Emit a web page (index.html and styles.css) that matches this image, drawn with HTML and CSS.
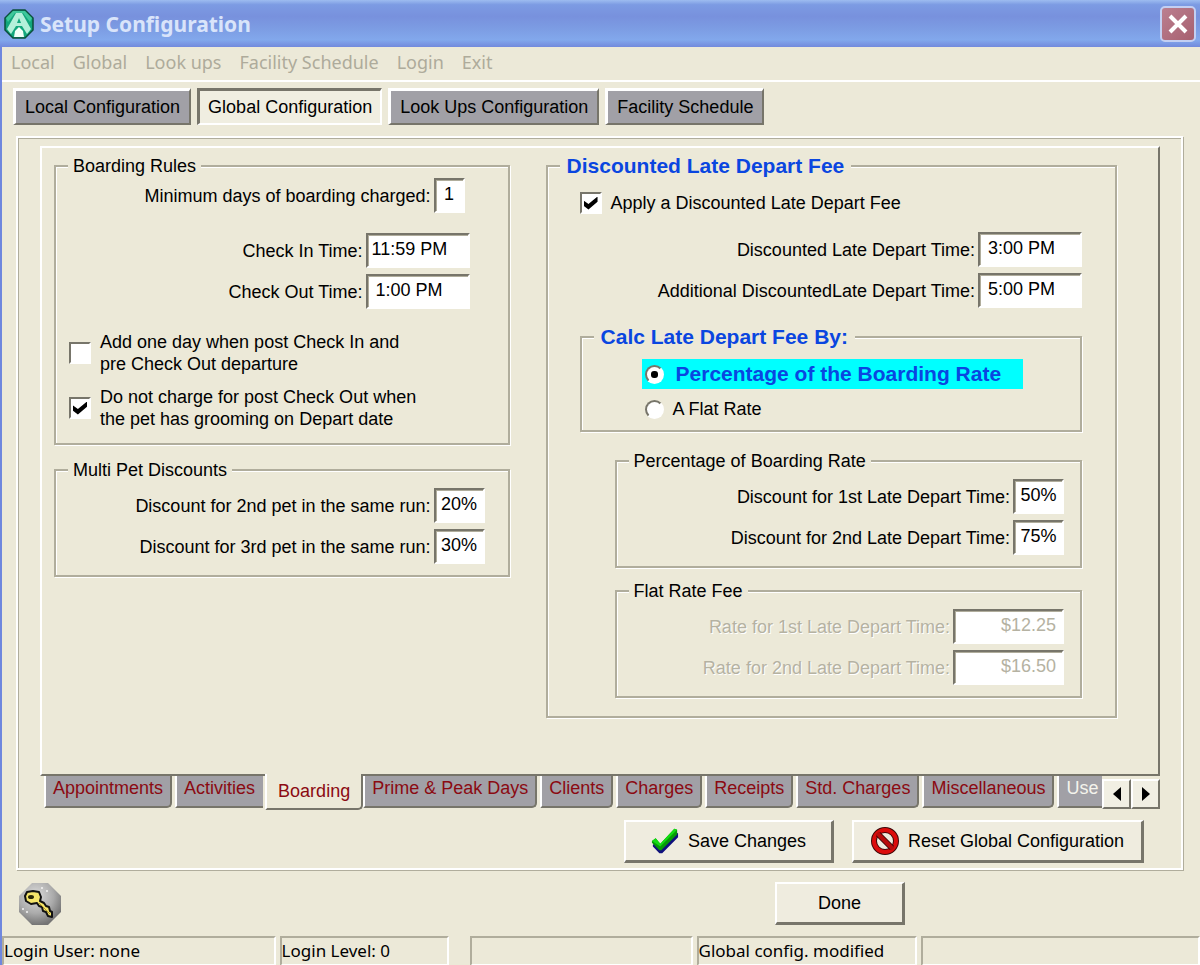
FILE: index.html
```html
<!DOCTYPE html>
<html lang="en">

<head>
	<meta charset="UTF-8">
	<meta name="viewport" content="width=device-width, initial-scale=1.0">

	<title>Setup Configuration</title>

	<link rel="stylesheet" href="styles.css">
</head>

<body>
	<div class="window">
		<header class="titlebar">
			<svg class="logo" viewBox="0 0 30 30" aria-hidden="true">
				<path d="M9 1h12l8 8v12l-8 8H9l-8-8V9z" fill="#12a67c" stroke="#0b4f3b" stroke-width="1.5" />
				<path d="M9 2h12l7 7-2 4-7-9h-8l-7 9-2-4z" fill="#3fc79b" />
				<path d="M12 4h6l9 16-4 5-5-8h-6l-5 8-4-5z" fill="#b4f0da" />
				<path d="M15 9l2 5h-4z" fill="#12a67c" />
				<path d="M10 28l1-6 4-4 4 4 1 6z" fill="#f2fff8" />
			</svg>
			<h1>Setup Configuration</h1>
			<button class="close" type="button" aria-label="Close">
				<svg viewBox="0 0 24 24" aria-hidden="true"><path d="M4 4l16 16M20 4L4 20" stroke="#fff" stroke-width="4" /></svg>
			</button>
		</header>

		<nav class="menu">
			<a href="#local">Local</a>
			<a href="#global">Global</a>
			<a href="#lookups">Look ups</a>
			<a href="#facility">Facility Schedule</a>
			<a href="#login">Login</a>
			<a href="#exit">Exit</a>
		</nav>

		<div class="sections">
			<button type="button">Local Configuration</button>
			<button type="button" class="active">Global Configuration</button>
			<button type="button">Look Ups Configuration</button>
			<button type="button">Facility Schedule</button>
		</div>

		<main class="panel">
			<div class="page">
				<div class="col">
					<fieldset class="rules">
						<legend>Boarding Rules</legend>
						<div class="field min-days">
							<label for="min-days">Minimum days of boarding charged:</label>
							<input type="text" id="min-days" class="tiny" value="1">
						</div>
						<div class="field">
							<label for="check-in">Check In Time:</label>
							<input type="text" id="check-in" class="time flush" value="11:59 PM">
						</div>
						<div class="field">
							<label for="check-out">Check Out Time:</label>
							<input type="text" id="check-out" class="time" value="1:00 PM">
						</div>
						<div class="options">
							<div class="check">
								<input type="checkbox" id="add-day">
								<label for="add-day">Add one day when post Check In and<br>pre Check Out departure</label>
							</div>
							<div class="check">
								<input type="checkbox" id="grooming" checked>
								<label for="grooming">Do not charge for post Check Out when<br>the pet has grooming on Depart date</label>
							</div>
						</div>
					</fieldset>

					<fieldset class="multi">
						<legend>Multi Pet Discounts</legend>
						<div class="field">
							<label for="second-pet">Discount for 2nd pet in the same run:</label>
							<input type="text" id="second-pet" class="percent" value="20%">
						</div>
						<div class="field">
							<label for="third-pet">Discount for 3rd pet in the same run:</label>
							<input type="text" id="third-pet" class="percent" value="30%">
						</div>
					</fieldset>
				</div>

				<fieldset class="late">
					<legend class="strong">Discounted Late Depart Fee</legend>
					<div class="check">
						<input type="checkbox" id="apply-late" checked>
						<label for="apply-late">Apply a Discounted Late Depart Fee</label>
					</div>
					<div class="field">
						<label for="late-time">Discounted Late Depart Time:</label>
						<input type="text" id="late-time" class="time" value="3:00 PM">
					</div>
					<div class="field">
						<label for="late-time-2">Additional DiscountedLate Depart Time:</label>
						<input type="text" id="late-time-2" class="time" value="5:00 PM">
					</div>

					<fieldset class="calc">
						<legend class="strong">Calc Late Depart Fee By:</legend>
						<div class="choice selected">
							<input type="radio" name="calc" id="calc-percent" checked>
							<label for="calc-percent">Percentage of the Boarding Rate</label>
						</div>
						<div class="choice">
							<input type="radio" name="calc" id="calc-flat">
							<label for="calc-flat">A Flat Rate</label>
						</div>
					</fieldset>

					<fieldset class="rate">
						<legend>Percentage of Boarding Rate</legend>
						<div class="field">
							<label for="percent-1">Discount for 1st Late Depart Time:</label>
							<input type="text" id="percent-1" class="percent" value="50%">
						</div>
						<div class="field">
							<label for="percent-2">Discount for 2nd Late Depart Time:</label>
							<input type="text" id="percent-2" class="percent" value="75%">
						</div>
					</fieldset>

					<fieldset class="rate">
						<legend>Flat Rate Fee</legend>
						<div class="field off">
							<label for="flat-1">Rate for 1st Late Depart Time:</label>
							<input type="text" id="flat-1" class="money" value="$12.25" disabled>
						</div>
						<div class="field off">
							<label for="flat-2">Rate for 2nd Late Depart Time:</label>
							<input type="text" id="flat-2" class="money" value="$16.50" disabled>
						</div>
					</fieldset>
				</fieldset>
			</div>

			<div class="tabrow">
				<div class="tabs" role="tablist">
					<button type="button" role="tab">Appointments</button>
					<button type="button" role="tab" class="before">Activities</button>
					<button type="button" role="tab" class="current" aria-selected="true">Boarding</button>
					<button type="button" role="tab">Prime &amp; Peak Days</button>
					<button type="button" role="tab">Clients</button>
					<button type="button" role="tab">Charges</button>
					<button type="button" role="tab">Receipts</button>
					<button type="button" role="tab">Std. Charges</button>
					<button type="button" role="tab">Miscellaneous</button>
					<button type="button" role="tab" class="faded">Use</button>
				</div>
				<div class="scroller">
					<button type="button" aria-label="Previous tabs"><svg viewBox="0 0 8 14" aria-hidden="true"><path d="M8 0v14L0 7z" /></svg></button>
					<button type="button" aria-label="Next tabs"><svg viewBox="0 0 8 14" aria-hidden="true"><path d="M0 0v14l8-7z" /></svg></button>
				</div>
			</div>

			<div class="actions">
				<button type="button" class="btn save">
					<svg viewBox="0 0 30 28" aria-hidden="true">
						<path d="M2 18l4-3 5 5L26 4l3 2v4L12 27H9l-7-7z" fill="#10107c" />
						<path d="M1 14l4-3 5 6L25 1l3 1v5L11 24H9l-8-8z" fill="#079a07" />
						<path d="M1 14l4-3 5 6L25 1l3 1L10 20z" fill="#12dc12" />
					</svg>
					Save Changes
				</button>
				<button type="button" class="btn reset">
					<svg viewBox="0 0 28 28" aria-hidden="true">
						<circle cx="14" cy="14" r="11" fill="none" stroke="#3c0808" stroke-width="6" />
						<circle cx="14" cy="14" r="11" fill="none" stroke="#dc0c0c" stroke-width="4" />
						<path d="M7 7l14 14" stroke="#3c0808" stroke-width="6" />
						<path d="M6 6l16 16" stroke="#b80c0c" stroke-width="4" />
					</svg>
					Reset Global Configuration
				</button>
			</div>
		</main>

		<div class="bottom">
			<button type="button" class="key" aria-label="Login">
				<svg viewBox="0 0 42 42" aria-hidden="true">
					<defs>
						<radialGradient id="ball" cx=".4" cy=".3" r=".7">
							<stop offset="0" stop-color="#dcdcdc" />
							<stop offset=".6" stop-color="#ababab" />
							<stop offset="1" stop-color="#747474" />
						</radialGradient>
					</defs>
					<path d="M13 0h16l13 13v16L29 42H13L0 29V13z" fill="url(#ball)" />
					<g fill="#f4f4f4">
						<circle cx="23" cy="5" r="1" />
						<circle cx="28" cy="8" r="1" />
						<circle cx="4" cy="26" r="1" />
						<circle cx="8" cy="29" r="1" />
					</g>
					<path d="M8 9l6-1 6 1 2 5-1 4 4 2 2 3 3 1 1 4 2 1v5l-4-1-2-4-3-1-1-4-3-1-2-3-6 1-5-3-1-5z" fill="#f5e56b" stroke="#111" stroke-width="2" stroke-linejoin="round" />
					<ellipse cx="12" cy="14" rx="3" ry="2" fill="#2a2708" />
					<path d="M20 20l11 11" stroke="#b79d28" />
				</svg>
			</button>
			<button type="button" class="btn done">Done</button>
		</div>

		<footer class="status">
			<span>Login User: none</span>
			<span>Login Level: 0</span>
			<span class="apart"></span>
			<span>Global config. modified</span>
			<span></span>
		</footer>
	</div>
</body>

</html>
```
FILE: styles.css
```css
*,
*:before,
*:after {
	box-sizing: border-box;
}

:root {
	--face: #ece9d8;
	--shadow: #b0ad9c;
	--dark: #77756a;
	--tab: #a1a0a6;
}

body {
	margin: 0;
	background-color: var(--face);
	color: #000;
	font: 18px/24px "Liberation Sans", Arial, sans-serif;
}

button,
input {
	font: inherit;
	color: inherit;
	margin: 0;
}

button {
	padding: 0;
	white-space: nowrap;
}

.window {
	display: flex;
	flex-direction: column;
	min-height: 100vh;
	border-left: 2px solid #6f87de;
}

/* title bar */

.titlebar {
	display: flex;
	align-items: center;
	height: 47px;
	margin-left: -2px;
	padding: 0 4px;
	background: linear-gradient(#9dbcf0 0, #7c9be3 10%, #7891dd 35%, #7c9ce3 60%, #82a8ec 85%, #7289dc 100%);
}

.logo {
	width: 30px;
	height: 30px;
}

h1 {
	flex: 1;
	margin: 0 0 0 6px;
	font: bold 21px/30px "Noto Sans", sans-serif;
	color: #d9e4fa;
}

.close {
	width: 36px;
	height: 36px;
	border: 2px solid #c3cff2;
	border-radius: 5px;
	background: linear-gradient(135deg, #bb7f90, #a7606f);
}

.close svg {
	display: block;
	width: 24px;
	height: 24px;
	margin: 0 auto;
}

.menu {
	display: flex;
	gap: 18px;
	height: 35px;
	padding: 3px 9px;
	border-bottom: 2px solid #fff;
	font: 18px/24px "Noto Sans", sans-serif;
}

.menu a {
	color: #aeab9b;
	text-decoration: none;
}

/* section buttons */

.sections {
	display: flex;
	gap: 6px;
	padding: 6px 11px 0;
}

.sections button {
	height: 37px;
	padding: 0 9px;
	border: solid;
	border-width: 3px 2px 2px 3px;
	border-color: #fff var(--dark) var(--dark) #fff;
	background-color: var(--tab);
}

.sections .active {
	padding: 0 8px;
	border-color: var(--dark) #fff #fff var(--dark);
	background-color: #f0eee1;
}

.panel {
	flex: 1;
	display: flex;
	flex-direction: column;
	margin: 11px 17px 0 14px;
	padding: 8px 21px 5px 22px;
	border: 2px solid #fff;
	box-shadow: inset 1px 1px 0 var(--shadow), 1px 1px 0 var(--shadow);
}

.page {
	flex: 1;
	display: grid;
	grid-template-columns: 456fr 572fr;
	align-items: start;
	gap: 36px;
	padding: 6px 41px 0 12px;
	border: 2px solid;
	border-color: #fff var(--dark) var(--dark) #fff;
}

fieldset {
	min-width: 0;
	margin: 0;
	padding: 0 23px 11px 12px;
	border: 2px solid var(--shadow);
	box-shadow: inset 1px 1px 0 #fff, 1px 1px 0 #fff;
}

legend {
	padding: 0 5px;
	background-color: var(--face);
}

.strong {
	padding: 0 7px;
	color: #0a46e0;
	font: bold 21px/24px "Liberation Sans", Arial, sans-serif;
}

.field {
	display: flex;
	justify-content: flex-end;
	align-items: center;
	gap: 3px;
	margin-top: 6px;
}

input[type="text"] {
	height: 35px;
	padding: 0 6px 3px 8px;
	border: 2px solid;
	border-color: var(--dark) #fff #fff var(--dark);
	border-radius: 0;
	background-color: #fff;
	box-shadow: inset 1px 1px 0 var(--shadow);
}

.time {
	width: 104px;
}

input.time.flush {
	padding-left: 4px;
}

input.tiny {
	width: 31px;
	padding: 0 0 3px;
	text-align: center;
}

input.percent {
	width: 51px;
	padding: 0 0 3px;
	text-align: center;
}

.money {
	width: 111px;
	text-align: right;
}

.off,
.off input {
	color: #b5b2a2;
}

.off label {
	text-shadow: 1px 1px 0 #fff;
}

/* left column */

.rules {
	padding-right: 38px;
	padding-bottom: 13px;
}

.min-days {
	margin: 0 5px 20px 0;
}

.options {
	margin-top: 22px;
}

.check {
	display: flex;
	align-items: center;
	gap: 9px;
}

.rules .check {
	margin: 0 0 11px 1px;
	line-height: 22px;
}

.rules .check:last-child {
	margin-bottom: 0;
}

input[type="checkbox"] {
	appearance: none;
	flex: none;
	display: grid;
	place-items: center;
	width: 22px;
	height: 22px;
	border: 2px solid;
	border-color: var(--dark) #fff #fff var(--dark);
	background-color: #fff;
}

input[type="checkbox"]:checked:before {
	content: "";
	width: 14px;
	height: 13px;
	background-color: #000;
	clip-path: polygon(0 30%, 35% 58%, 100% 0, 100% 40%, 35% 100%, 0 72%);
}

.multi {
	margin-top: 13px;
}

/* right column */

.late {
	padding: 0 33px 18px 32px;
}

.late > legend {
	margin-left: -20px;
}

.late > .check {
	margin: 13px 0 17px;
}

.calc {
	margin-top: 17px;
	padding: 10px 57px 6px 12px;
}

.choice {
	display: flex;
	align-items: center;
	gap: 9px;
	height: 30px;
	margin-left: 48px;
	padding-left: 3px;
}

.choice + .choice {
	margin-top: 5px;
}

.selected {
	gap: 12px;
	background-color: #0ff;
	color: #0a46e0;
	font: bold 21px/24px "Liberation Sans", Arial, sans-serif;
}

input[type="radio"] {
	appearance: none;
	display: grid;
	place-items: center;
	width: 19px;
	height: 19px;
	border: 2px solid;
	border-color: var(--dark) #fff #fff var(--dark);
	border-radius: 50%;
	background-color: #fff;
}

input[type="radio"]:checked:before {
	content: "";
	width: 7px;
	height: 7px;
	border-radius: 3px;
	background-color: #000;
}

.rate {
	margin: 17px 0 0 35px;
	padding-right: 16px;
}

.rate + .rate {
	margin-top: 11px;
}

/* bottom tabs */

.tabrow {
	display: flex;
	height: 37px;
	margin-top: -2px;
}

.tabs {
	flex: 1;
	display: flex;
	align-items: flex-start;
	gap: 3px;
	min-width: 0;
	padding-left: 4px;
	overflow: hidden;
}

.tabs button {
	flex: none;
	height: 32px;
	margin-top: 2px;
	padding: 0 7px 6px;
	border: 2px solid;
	border-color: transparent var(--dark) var(--dark) #fff;
	border-top: 0;
	border-radius: 0 0 5px 0;
	background-color: var(--tab);
	color: #8b0a12;
}

.tabs .before {
	padding-right: 8px;
	border-right: 0;
	border-radius: 0;
}

/* covers the page's bottom edge */
.tabs .current {
	height: 36px;
	margin: 0 -3px 0 -1px;
	padding: 0 11px;
	background-color: var(--face);
}

.tabs .faded {
	color: #f4f3ec;
}

.scroller {
	display: flex;
	padding-top: 5px;
}

.scroller button {
	width: 29px;
	height: 30px;
	border: 2px solid;
	border-color: #fff var(--dark) var(--dark) #fff;
	background-color: #f1efe3;
}

.scroller svg {
	display: block;
	width: 8px;
	height: 14px;
	margin: 0 auto;
}

/* buttons */

.btn {
	display: flex;
	align-items: center;
	justify-content: center;
	gap: 9px;
	height: 43px;
	border: solid;
	border-width: 2px 3px 3px 2px;
	border-color: #fff var(--dark) var(--dark) #fff;
	background-color: #efecdf;
}

.btn svg {
	width: 28px;
	height: 28px;
}

.actions {
	display: flex;
	justify-content: flex-end;
	gap: 18px;
	margin-top: 9px;
	padding-right: 16px;
}

.save {
	width: 210px;
}

.reset {
	width: 292px;
}

.bottom {
	display: flex;
	align-items: center;
	justify-content: space-between;
	margin: 12px 295px 0 17px;
}

.key {
	width: 42px;
	height: 42px;
	border: 0;
	background: none;
}

.key svg {
	display: block;
}

.done {
	width: 130px;
}

.status {
	display: grid;
	grid-template-columns: 275fr 170fr 241fr 222fr 280fr;
	gap: 4px;
	height: 29px;
	margin-top: 11px;
	font: 17px/26px "Noto Sans", sans-serif;
}

.status span {
	border: 2px solid;
	border-color: var(--shadow) #fff #fff var(--shadow);
	white-space: nowrap;
}

.status .apart {
	margin-left: 17px;
}
```
